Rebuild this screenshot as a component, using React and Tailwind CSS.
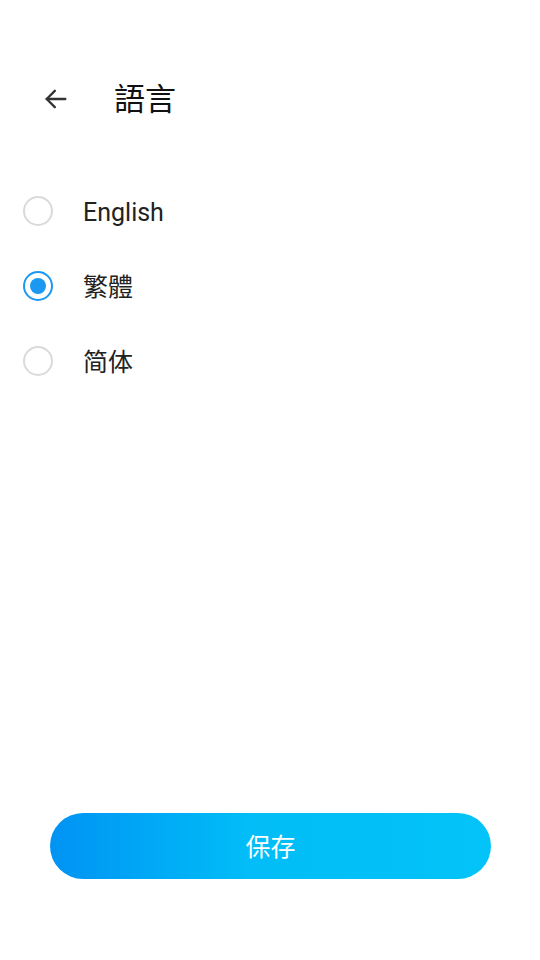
import React, { useState } from "react";

const font = { fontFamily: 'Roboto, "Noto Sans CJK TC", "Noto Sans CJK SC", sans-serif' };

function Radio({ checked }) {
  return (
    <div className={`w-[30px] h-[30px] rounded-full flex items-center justify-center border-[2px] ${checked ? "border-[#1a98f2]" : "border-[#dadada]"}`}>
      {checked && <div className="w-[16px] h-[16px] rounded-full bg-[#1a98f2]" />}
    </div>
  );
}

export default function App() {
  const [sel, setSel] = useState(1);
  const items = ["English", "繁體", "简体"];
  return (
    <div className="w-[540px] h-[960px] bg-white flex flex-col" style={font}>
      <div className="flex items-center h-[60px] mt-[69px] pl-[42px]">
        <svg width="28" height="28" viewBox="0 0 24 24" fill="none" stroke="#333" strokeWidth="2" strokeLinecap="round" strokeLinejoin="round">
          <path d="M20 12H4" />
          <path d="M11 5l-7 7 7 7" />
        </svg>
        <span className="ml-[44px] text-[31px] text-[#111] leading-none">語言</span>
      </div>
      <div className="flex flex-col mt-[44px]">
        {items.map((t, i) => (
          <div key={t} className="flex items-center h-[75px] pl-[23px] cursor-pointer" onClick={() => setSel(i)}>
            <Radio checked={sel === i} />
            <span className="ml-[30px] text-[25px] text-[#222] leading-none pt-[3px]">{t}</span>
          </div>
        ))}
      </div>
      <div className="flex-1" />
      <div className="px-[50px] mb-[81px]">
        <button className="w-[441px] h-[66px] rounded-full bg-gradient-to-r from-[#0293f3] via-[#02bdf7] via-45% to-[#03c3f8] text-white text-[25px] flex items-center justify-center pt-[3px]">
          保存
        </button>
      </div>
    </div>
  );
}
